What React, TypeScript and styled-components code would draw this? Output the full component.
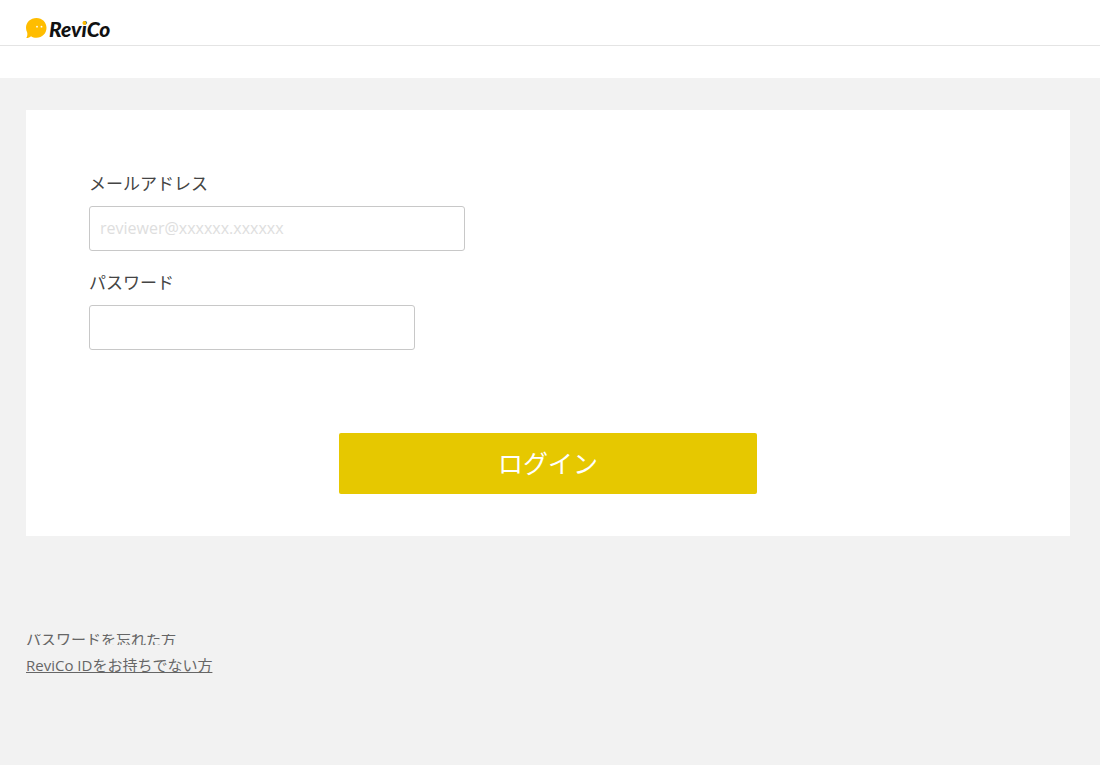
import React from "react";
import styled, { createGlobalStyle } from "styled-components";

const GlobalStyle = createGlobalStyle`
  *, *::before, *::after { box-sizing: border-box; }
  html, body, #root { min-height: 100vh; }
  body {
    margin: 0;
    background: #f2f2f2;
    color: #444;
    font-family: "Open Sans", "Noto Sans CJK JP", sans-serif;
    font-size: 17px;
  }
`;

const Header = styled.header`
  display: flex;
  align-items: flex-end;
  height: 46px;
  padding: 0 26px 3px;
  background: #fff;
  border-bottom: 1px solid #e4e4e4;
`;

const Logo = styled.svg`
  display: block;
  width: 86px;
  height: 26px;
`;

const Wordmark = styled.text`
  font-family: Lato, sans-serif;
  font-size: 21px;
  font-weight: 900;
  font-style: italic;
  fill: #111;
`;

const SubBar = styled.div`
  height: 32px;
  background: #fff;
`;

const Main = styled.main`
  padding: 32px 30px 32px 26px;
`;

const Card = styled.form`
  display: flex;
  flex-direction: column;
  padding: 61px 63px 42px;
  background: #fff;
`;

const Field = styled.div`
  display: flex;
  flex-direction: column;
  gap: 9px;
  margin-bottom: 19px;
`;

const Label = styled.label`
  line-height: 26px;
`;

const Input = styled.input<{ $width: number }>`
  width: ${(p) => p.$width}px;
  max-width: 100%;
  height: 45px;
  padding: 0 10px 2px;
  border: 1px solid #c8c8c8;
  border-radius: 3px;
  background: #fff;
  color: #444;
  font: inherit;
  font-size: 16px;

  &::placeholder {
    color: #dedede;
    opacity: 1;
  }
`;

const Submit = styled.button`
  align-self: center;
  width: 418px;
  max-width: 100%;
  height: 61px;
  margin-top: 64px;
  padding: 0 0 3px;
  border: 0;
  border-radius: 2px;
  background: #e6c800;
  color: #fff;
  font: inherit;
  font-size: 25px;
  cursor: pointer;
`;

const Links = styled.nav`
  display: flex;
  flex-direction: column;
  align-items: flex-start;
  gap: 9px;
  margin-top: 98px;
`;

const TextLink = styled.a<{ $clipped?: boolean }>`
  color: #666;
  font-size: 15px;
  line-height: ${(p) => (p.$clipped ? "11px" : "22px")};
  overflow: ${(p) => (p.$clipped ? "hidden" : "visible")};
`;

export default function App() {
  return (
    <>
      <GlobalStyle />
      <Header>
        <Logo viewBox="0 0 86 26" role="img" aria-label="ReviCo">
          <path
            d="M10.5 2C16.2 2 20.5 6.300 20.500 11.800C20.500 17.500 16.200 21.700 10.500 21.700C8.400 21.700 6.500 21.200 5 20.200C3.800 21.300 2.300 21.900 0.300 22C1.300 20.500 1.600 18.600 1.200 16.600C0.400 15.200 0 13.600 0 11.800C0 6.300 4.500 2 10.500 2Z"
            fill="#ffbd00"
          />
          <circle cx="11" cy="10.700" r="0.900" fill="#fff" />
          <circle cx="15.500" cy="10.700" r="0.900" fill="#fff" />
          <Wordmark x="23" y="21">ReviCo</Wordmark>
          <circle cx="58.500" cy="7" r="2" fill="#ffbd00" />
        </Logo>
      </Header>
      <SubBar />
      <Main>
        <Card onSubmit={(e) => e.preventDefault()}>
          <Field>
            <Label htmlFor="email">メールアドレス</Label>
            <Input id="email" type="email" placeholder="reviewer@xxxxxx.xxxxxx" $width={376} />
          </Field>
          <Field>
            <Label htmlFor="password">パスワード</Label>
            <Input id="password" type="password" $width={326} />
          </Field>
          <Submit type="submit">ログイン</Submit>
        </Card>
        <Links>
          <TextLink href="#forgot" $clipped>パスワードを忘れた方</TextLink>
          <TextLink href="#register">ReviCo IDをお持ちでない方</TextLink>
        </Links>
      </Main>
    </>
  );
}
